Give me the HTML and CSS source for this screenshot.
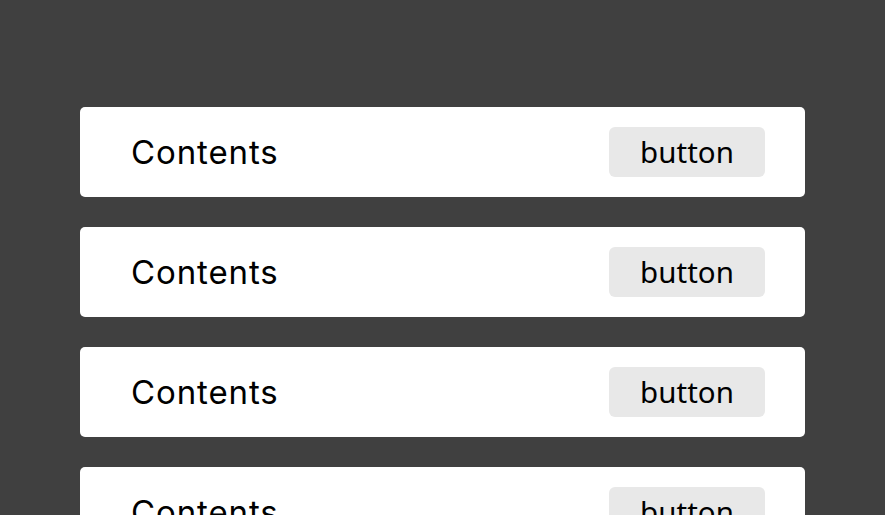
FILE: index.html
```html
<!DOCTYPE html>
<html>
<head>
<meta charset="utf-8">
<link rel="stylesheet" href="styles.css">
</head>
<body>
<div class="list">
  <div class="card"><span class="label">Contents</span><button class="btn">button</button></div>
  <div class="card"><span class="label">Contents</span><button class="btn">button</button></div>
  <div class="card"><span class="label">Contents</span><button class="btn">button</button></div>
  <div class="card"><span class="label">Contents</span><button class="btn">button</button></div>
</div>
</body>
</html>
```
FILE: styles.css
```css
html, body {
  margin: 0;
  padding: 0;
  background: #404040;
  height: 100%;
  overflow: hidden;
}
body {
  font-family: Inter, "Noto Sans", sans-serif;
}
.list {
  display: flex;
  flex-direction: column;
  gap: 30px;
  padding: 107px 80px 0 80px;
}
.card {
  background: #ffffff;
  border-radius: 5px;
  height: 90px;
  box-sizing: border-box;
  padding: 20px 40px 20px 51px;
  display: flex;
  align-items: center;
  justify-content: space-between;
  flex-shrink: 0;
}
.label {
  font-size: 33px;
  letter-spacing: 0.9px;
  color: #000;
}
.btn {
  font-family: "Noto Sans", sans-serif;
  font-size: 29.5px;
  color: #000;
  background: #e8e8e8;
  border: none;
  border-radius: 6px;
  width: 156px;
  height: 50px;
  padding: 0 0 2px 0;
  box-sizing: border-box;
}
```
